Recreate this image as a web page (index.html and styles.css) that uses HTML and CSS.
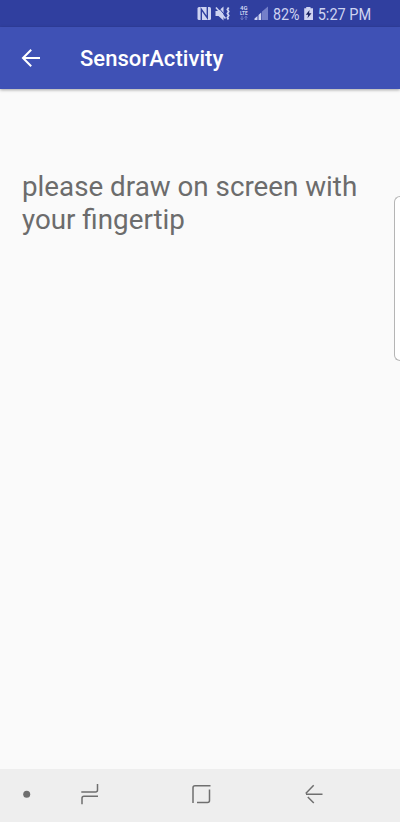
FILE: index.html
```html
<!DOCTYPE html>
<html lang="en">
<head>
<meta charset="utf-8">
<title>SensorActivity</title>
<link rel="stylesheet" href="styles.css">
</head>
<body>
<div class="screen">
  <div class="status">
    <svg class="status-icons" width="203" height="27" viewBox="197 0 203 27">
      <rect x="197.500" y="7" width="13.500" height="13" rx="1.500" fill="#ced3f1"/>
      <path d="M201.300 20V9.300l6 8.500V7" fill="none" stroke="#303f9f" stroke-width="1.400"/>
      <path d="M215.500 11h3l5-4.500v14l-5-4.500h-3z" fill="#ced3f1"/>
      <path d="M218 7l8 9.500" stroke="#303f9f" stroke-width="1"/>
      <path d="M216 7.500l9.500 11" stroke="#ced3f1" stroke-width="1.600"/>
      <path d="M228.700 7.500l-1.300 2 1.300 2-1.300 2 1.300 2-1.300 2 1 2" fill="none" stroke="#ced3f1" stroke-width="1.800"/>
      <text class="network" x="240" y="10" textLength="7.500" lengthAdjust="spacingAndGlyphs">4G</text>
      <text class="network" x="240" y="14.500" textLength="7.500" lengthAdjust="spacingAndGlyphs">LTE</text>
      <path d="M242 16v4M240.700 18.300l1.300 1.400 1.300-1.400M246 20v-4M244.700 17.700l1.300-1.400 1.300 1.400" fill="none" stroke="#747fc9" stroke-width="1"/>
      <path d="M254.500 20v-1.500l3-2.500v4zM258.500 20v-5l2.700-2.600V20z" fill="#ced3f1"/>
      <path d="M262 20v-8.400l6-5.100V20z" fill="#747fc9"/>
      <text class="status-text" x="273" y="19.600" textLength="26.500" lengthAdjust="spacingAndGlyphs">82%</text>
      <path d="M304.200 8.300h2V7h4.300v1.300h2.500V20h-8.800z" fill="#ced3f1"/>
      <path d="M309.500 10l-3.700 4.800h2.400l-.7 3.400 4-4.900h-2.400z" fill="#18205f"/>
      <text class="status-text" x="317.700" y="19.600" textLength="53.500" lengthAdjust="spacingAndGlyphs">5:27 PM</text>
    </svg>
  </div>
  <header class="toolbar">
    <svg class="back" width="20" height="20" viewBox="0 0 20 20"><path d="M19 10H2.500M10.200 1.800L2 10l8.200 8.200" fill="none" stroke="#fff" stroke-width="2"/></svg>
    <h1 class="title">SensorActivity</h1>
  </header>
  <main class="content">
    <p class="message">please draw on screen with<br>your fingertip</p>
    <div class="edge-handle"></div>
  </main>
  <nav class="navbar">
    <svg width="400" height="53" viewBox="0 769 400 53" fill="none" stroke="#6f6f6f" stroke-width="1.500">
      <circle cx="26.700" cy="794.300" r="3.500" fill="#6f6f6f" stroke="none"/>
      <path d="M81.300 792h14.200q2 0 2-2v-6M98 796.300H84q-2 0-2 2v6"/>
      <path d="M210.500 785.700H195q-2 0-2 2V803M209.500 789.500v11q0 2-2 2H197"/>
      <path d="M322.500 794.300H306M313.700 785.300l-8 8.300M307.800 797l6 6"/>
    </svg>
  </nav>
</div>
</body>
</html>
```
FILE: styles.css
```css
* { box-sizing: border-box; }
body { margin: 0; font-family: Roboto, "Liberation Sans", sans-serif; }
svg { display: block; }
.screen {
  width: 400px;
  height: 822px;
  display: flex;
  flex-direction: column;
  background: #fafafa;
  overflow: hidden;
}
.status {
  height: 27px;
  padding-left: 197px;
  background: #303f9f;
}
.status-text { font-size: 16px; fill: #ced3f1; }
.network { font-size: 4.500px; font-weight: 700; fill: #ced3f1; }
.toolbar {
  height: 62px;
  display: flex;
  align-items: center;
  padding-left: 21px;
  gap: 39px;
  background: #3f51b5;
  box-shadow: 0 1px 3px rgba(0, 0, 0, .35);
}
.title {
  margin: 0;
  padding-top: 1px;
  font-size: 22px;
  font-weight: 500;
  letter-spacing: .05px;
  color: #fff;
}
.content {
  flex: 1;
  position: relative;
  padding: 81px 0 0 22px;
}
.message {
  margin: 0;
  font-size: 27.780px;
  line-height: 33px;
  color: #6c6c6c;
  white-space: nowrap;
}
.edge-handle {
  position: absolute;
  top: 107px;
  right: 0;
  width: 6px;
  height: 165px;
  border: 1px solid #b5b5b5;
  border-right: 0;
  border-radius: 6px 0 0 6px;
  background: #fff;
}
.navbar { height: 53px; background: #eee; }
```
